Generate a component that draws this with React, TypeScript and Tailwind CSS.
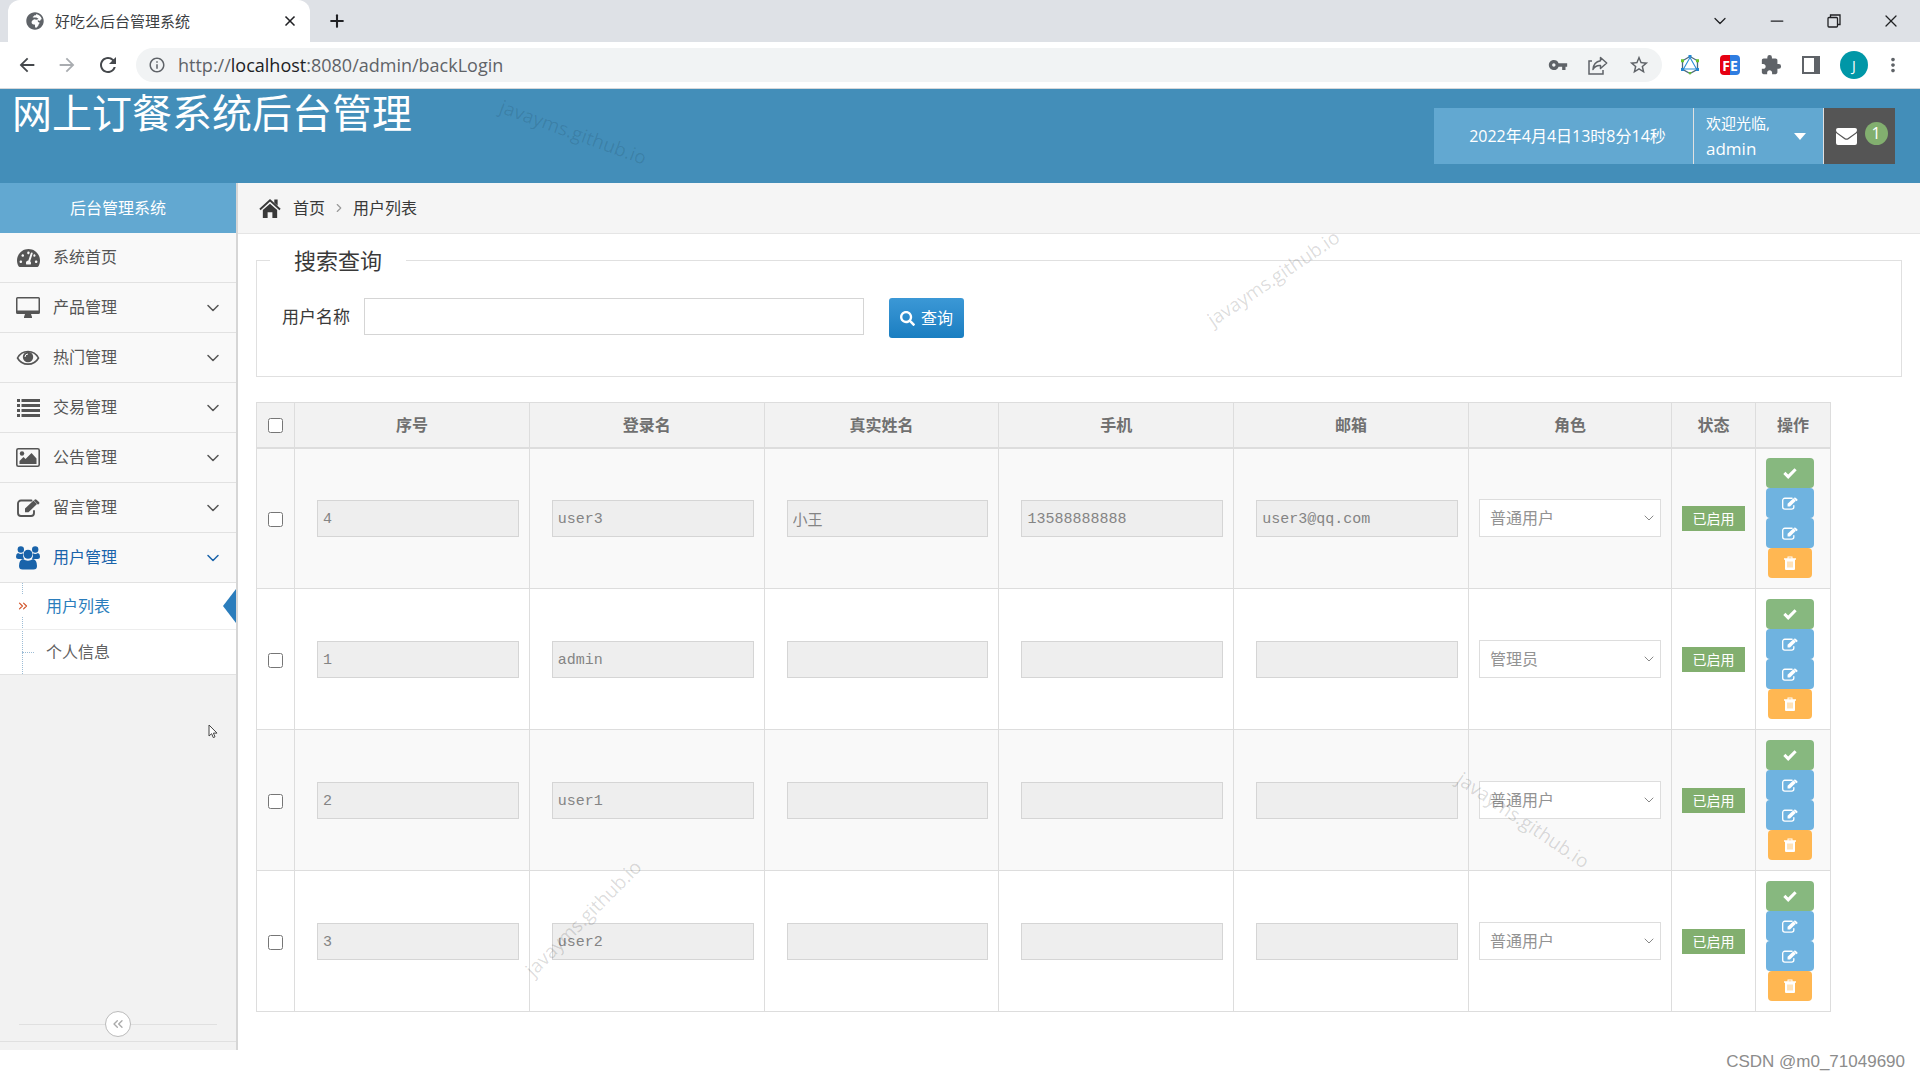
import React, { useState } from 'react';
import { FaTachometerAlt, FaGlobeAfrica, FaSearch } from 'react-icons/fa';
import {
  MdArrowBack,
  MdArrowForward,
  MdExtension,
  MdInfoOutline,
  MdMoreVert,
  MdRefresh,
  MdStarBorder,
  MdVpnKey,
} from 'react-icons/md';
import { ChevronDown, ChevronRight, ChevronsLeft, ChevronsRight, Minus, Plus, X } from 'lucide-react';

interface MenuItem {
  label: string;
  icon: React.ReactNode;
  hasChildren: boolean;
}

interface User {
  id: string;
  login: string;
  name: string;
  phone: string;
  email: string;
  role: string;
}

const USERS: User[] = [
  { id: '4', login: 'user3', name: '小王', phone: '13588888888', email: 'user3@qq.com', role: '普通用户' },
  { id: '1', login: 'admin', name: '', phone: '', email: '', role: '管理员' },
  { id: '2', login: 'user1', name: '', phone: '', email: '', role: '普通用户' },
  { id: '3', login: 'user2', name: '', phone: '', email: '', role: '普通用户' },
];

const COLUMNS = ['序号', '登录名', '真实姓名', '手机', '邮箱', '角色', '状态', '操作'];

const MonitorIcon = () => (
  <svg viewBox="0 0 24 22" className="h-[22px] w-6" fill="currentColor">
    <path fillRule="evenodd" d="M1.5 0h21A1.5 1.5 0 0 1 24 1.5v14a1.5 1.5 0 0 1-1.5 1.5H15l1 3v1H8v-1l1-3H1.5A1.5 1.5 0 0 1 0 15.500v-14A1.5 1.5 0 0 1 1.5 0zM1.5 1.5v12h21v-12z" />
  </svg>
);

const EyeIcon = () => (
  <svg viewBox="0 0 24 16" className="h-4 w-6">
    <path d="M1.5 8C6 -0.7 18 -0.7 22.5 8C18 16.200 6 16.200 1.5 8z" fill="none" stroke="currentColor" strokeWidth="1.6" />
    <circle cx="12" cy="7" r="5.2" fill="currentColor" />
    <path d="M9 7a3 3 0 0 1 3-3" fill="none" stroke="#f9f9f9" strokeWidth="1" />
  </svg>
);

const ListIcon = () => (
  <svg viewBox="0 0 23 18" className="h-[18px] w-[23px]" fill="currentColor">
    <path d="M0 0h3v3H0zM0 5h3v3H0zM0 10h3v3H0zM0 15h3v3H0zM4.500 0H23v3H4.500zM4.500 5H23v3H4.500zM4.500 10H23v3H4.500zM4.500 15H23v3H4.500z" />
  </svg>
);

const PictureIcon = () => (
  <svg viewBox="0 0 24 19" className="h-[19px] w-6">
    <rect x=".8" y=".8" width="22.4" height="17.4" rx="1.500" fill="none" stroke="currentColor" strokeWidth="1.600" />
    <circle cx="6" cy="5.500" r="2.200" fill="currentColor" />
    <path d="M3.500 16v-3l4-4 2 2L15.500 5l5 5.500V16z" fill="currentColor" />
  </svg>
);

const EditIcon = ({ className }: { className: string }) => (
  <svg viewBox="0 0 23 18" className={className}>
    <path d="M14.500 1.500H4A3 3 0 0 0 1 4.500v9.500a3 3 0 0 0 3 3h10a3 3 0 0 0 3-3v-2" fill="none" stroke="currentColor" strokeWidth="1.900" strokeLinecap="round" />
    <path d="M8 9.500L16.500 1.500 20 5 11.500 13.300H8z" fill="currentColor" />
    <path d="M17.500 .8q1-1 2 0L22 3q.8 1 0 1.800l-1 1L17 1.500z" fill="currentColor" />
  </svg>
);

const CheckIcon = () => (
  <svg viewBox="0 0 14 11" className="h-[11px] w-[14px]" fill="currentColor">
    <path d="M.3 6L2.400 3.800 5.200 6.400 11.500.2 13.700 2.300 5.200 10.900z" />
  </svg>
);

const MailIcon = () => (
  <svg viewBox="0 0 21 17" className="h-[17px] w-[21px]" fill="currentColor">
    <path d="M2 0h17q2 0 2 2 0 1.500-1.500 2.700L12 10q-1.500 1-3 0L1.500 4.700Q0 3.500 0 2 0 0 2 0z" />
    <path d="M0 5l8.500 6.200q2 1.200 4 0L21 5v10q0 2-2 2H2q-2 0-2-2z" />
  </svg>
);

const UsersIcon = () => (
  <svg viewBox="0 0 24 24" className="h-6 w-6" fill="currentColor">
    <circle cx="4.800" cy="3.500" r="3.200" />
    <circle cx="19.200" cy="3.500" r="3.200" />
    <path d="M2 7q2.800 1.800 5 .3Q6.500 10.500 8 13H2.500Q0 13 0 10.500 0 7.500 2 7zM22 7q-2.800 1.800-5 .3.500 3.200-1 5.700h5.500q2.500 0 2.500-2.500 0-3-2-3.500z" />
    <circle cx="12" cy="8.200" r="4.500" />
    <path d="M7 13q5 3.500 10 0 4 1 4 7 0 3.500-3.500 3.500h-11Q3 23.500 3 20q0-6 4-7z" />
  </svg>
);

const HomeIcon = () => (
  <svg viewBox="0 0 24 22" className="h-[21px] w-6" fill="currentColor">
    <path d="M12 6l7.500 6.500V21h-5v-6h-5v6h-5v-8.500z" />
    <path d="M1.500 12L12 2.500 22.500 12" fill="none" stroke="currentColor" strokeWidth="2" />
    <path d="M16.500 1.500h3.500v6.500l-3.500-3z" />
  </svg>
);

const TrashIcon = () => (
  <svg viewBox="0 0 12 14" className="h-[14px] w-3">
    <path d="M0 2.200h3.500V.5h5v1.700H12v1.600h-1V13q0 1-1 1H2q-1 0-1-1V3.800H0zM4.500 1.500v.7h3v-.7z" fill="#fff" fillRule="evenodd" />
    <path d="M4 5.500v6M6 5.500v6M8 5.500v6" stroke="#ffb752" strokeWidth=".8" />
  </svg>
);

const ShareIcon = () => (
  <svg viewBox="0 0 20 19" className="h-[19px] w-5" fill="none" stroke="#5f6368" strokeWidth="1.5">
    <path d="M4 5H1v13h14v-4" />
    <path d="M12.500 1.500L18.700 7l-6.200 5.500v-3Q7.500 9 5 13.500 5.500 6 12.500 4.800z" strokeLinejoin="round" />
  </svg>
);

const HexagonIcon = () => (
  <svg viewBox="0 0 20 20" className="h-5 w-5">
    <path d="M10 1.500l7.500 4.300v8.500L10 18.500l-7.500-4.200V5.800z" fill="none" stroke="#4b6a80" strokeWidth="1.3" />
    <path d="M10 2.500L16.500 14h-13z" fill="none" stroke="#2b8fd8" strokeWidth="1.1" />
    <path d="M8.500 0h3v2.500h-3zM1 13h3v3H1zM16 13h3v3h-3z" fill="#2386d1" />
    <path d="M1 4.300h3v3H1zM16 4.300h3v3h-3zM8.300 17h3.400L10 20z" fill="#66c32e" />
  </svg>
);

const MENU: MenuItem[] = [
  { label: '系统首页', icon: <FaTachometerAlt className="h-[22px] w-[23px]" />, hasChildren: false },
  { label: '产品管理', icon: <MonitorIcon />, hasChildren: true },
  { label: '热门管理', icon: <EyeIcon />, hasChildren: true },
  { label: '交易管理', icon: <ListIcon />, hasChildren: true },
  { label: '公告管理', icon: <PictureIcon />, hasChildren: true },
  { label: '留言管理', icon: <EditIcon className="h-[18px] w-[23px]" />, hasChildren: true },
  { label: '用户管理', icon: <UsersIcon />, hasChildren: true },
];

const BrowserBar = () => (
  <div>
    {/* Tab strip */}
    <div className="flex h-[42px] items-center bg-[#dee1e6] pl-2">
      <div className="flex h-full w-[302px] items-center rounded-t-xl bg-white pr-3 pl-[18px]">
        <FaGlobeAfrica className="h-[18px] w-[18px] text-[#5f6368]" />
        <span className="ml-[11px] flex-1 text-[15px] text-[#3c4043]">好吃么后台管理系统</span>
        <button aria-label="Close tab">
          <X className="h-4 w-4 text-[#202124]" strokeWidth={2.5} />
        </button>
      </div>
      <button aria-label="New tab" className="ml-[17px]">
        <Plus className="h-5 w-5 text-[#202124]" strokeWidth={2.5} />
      </button>
      <div className="ml-auto flex items-center gap-[37px] pr-[19px] text-[#202124]">
        <button aria-label="Tabs"><ChevronDown className="h-5 w-5" strokeWidth={1.5} /></button>
        <button aria-label="Minimize"><Minus className="h-5 w-5" strokeWidth={1.5} /></button>
        <button aria-label="Restore">
          <svg viewBox="0 0 14 14" className="mx-[3px] h-[14px] w-[14px]" fill="none" stroke="currentColor" strokeWidth="1.3">
            <rect x="1" y="3.5" width="9.5" height="9.5" rx="1" />
            <path d="M3.500 3.500V1H13v9.500h-2.500" />
          </svg>
        </button>
        <button aria-label="Close"><X className="h-5 w-5" strokeWidth={1.5} /></button>
      </div>
    </div>

    {/* Address bar */}
    <div className="flex h-[47px] items-center border-b border-[#d5d7da] bg-white px-4 text-[#5f6368]">
      <button aria-label="Back"><MdArrowBack className="h-[22px] w-[22px] text-[#45484c]" /></button>
      <button aria-label="Forward" className="ml-[18px]"><MdArrowForward className="h-[22px] w-[22px] text-[#a9acb0]" /></button>
      <button aria-label="Reload" className="ml-[18px]"><MdRefresh className="h-6 w-6 text-[#45484c]" /></button>
      <div className="ml-4 flex h-[34px] flex-1 items-center rounded-full bg-[#f1f3f4] pr-3 pl-3">
        <MdInfoOutline className="h-[18px] w-[18px]" />
        <span className="ml-3 flex-1 text-[18px]">
          http://<span className="text-[#202124]">localhost</span>:8080/admin/backLogin
        </span>
        <div className="flex items-center gap-5">
          <MdVpnKey className="h-5 w-5" />
          <ShareIcon />
          <MdStarBorder className="h-[22px] w-[22px]" />
        </div>
      </div>
      <div className="ml-[18px] flex items-center gap-5">
        <HexagonIcon />
        <span className="flex h-5 w-5 items-center justify-center rounded-sm bg-linear-to-r from-[#e60012] from-50% to-[#2f7de1] to-50% text-[14px] font-bold text-white">
          FE
        </span>
        <MdExtension className="h-[22px] w-[22px]" />
        <span className="h-[18px] w-[18px] border-2 border-r-[6px] border-[#5f6368]" />
        <span className="flex h-7 w-7 items-center justify-center rounded-full bg-[#0097a7] text-[14px] text-white">J</span>
      </div>
      <MdMoreVert className="ml-[14px] h-[22px] w-[22px]" />
    </div>
  </div>
);

const Header = () => (
  <header className="flex h-[94px] items-start justify-between bg-[#438eb9] pr-[25px] pl-3 text-white">
    <h1 className="text-[40px] leading-[48px]">网上订餐系统后台管理</h1>
    <div className="mt-[19px] flex h-14">
      <div className="flex w-[259px] items-center justify-center bg-[#62a8d1] pl-2 text-[16px]">2022年4月4日13时8分14秒</div>
      <button className="flex w-[131px] items-center justify-between border-x border-[#e1e1e1] bg-[#62a8d1] pr-[17px] pl-3 text-left">
        <span>
          <span className="block text-[15px] leading-[26px]">欢迎光临,</span>
          <span className="block text-[17px] leading-[26px]">admin</span>
        </span>
        <svg viewBox="0 0 12 7" className="h-[7px] w-3" fill="currentColor"><path d="M0 0h12L6 7z" /></svg>
      </button>
      <button className="flex w-[71px] items-center justify-center gap-2 bg-[#555] pl-1">
        <MailIcon />
        <span className="mb-[6px] flex h-[23px] w-[23px] items-center justify-center rounded-full bg-[#82af6f] text-[16px]">1</span>
      </button>
    </div>
  </header>
);

const Sidebar = () => (
  <nav className="flex w-[238px] shrink-0 flex-col border-r-2 border-[#d6d6d6] bg-[#f2f2f2]">
    <div className="flex h-[50px] items-center justify-center bg-[#62a8d1] text-[16px] text-white">后台管理系统</div>
    {MENU.map((item) => (
      <a
        key={item.label}
        href="#"
        className={`flex h-[50px] items-center border-b border-[#e2e2e2] bg-[#f9f9f9] pr-[13px] pl-4 text-[16px] ${
          item.label === '用户管理' ? 'text-[#1963aa]' : 'text-[#555]'
        }`}
      >
        <span className="flex w-6 justify-center">{item.icon}</span>
        <span className="mb-[2px] ml-[13px] flex-1">{item.label}</span>
        {item.hasChildren && <ChevronDown className="h-5 w-5" strokeWidth={1.8} />}
      </a>
    ))}
    <ul className="relative border-b border-[#e2e2e2] bg-white text-[16px]">
      <li className="absolute top-0 bottom-0 left-[22px] border-l border-dotted border-[#9dbdd6]" aria-hidden="true" />
      <li>
        <a href="#" className="relative flex h-[47px] items-center border-b border-[#ededed] pl-4 text-[#2b7dbc]">
          <span className="bg-white py-1">
            <ChevronsRight className="h-[14px] w-[14px] text-[#d2562c]" />
          </span>
          <span className="ml-4">用户列表</span>
          <svg viewBox="0 0 13 34" className="ml-auto h-[34px] w-[13px]"><path d="M13 0v34L0 17z" fill="#2b7dbc" /></svg>
        </a>
      </li>
      <li>
        <a href="#" className="flex h-11 items-center pl-[22px] text-[#616161]">
          <span className="w-3 border-t border-dotted border-[#9dbdd6]" />
          <span className="ml-3">个人信息</span>
        </a>
      </li>
    </ul>
    <div className="mt-auto mb-2 flex items-center border-b border-[#e0e0e0] px-[19px] pb-1">
      <span className="flex-1 border-t border-[#e0e0e0]" />
      <button aria-label="Collapse" className="flex h-[26px] w-[26px] items-center justify-center rounded-full border border-[#bbb] bg-white text-[#aaa]">
        <ChevronsLeft className="h-4 w-4" />
      </button>
      <span className="flex-1 border-t border-[#e0e0e0]" />
    </div>
  </nav>
);

const ReadonlyField = ({ label, value }: { label: string; value: string }) => (
  <td className="border border-[#ddd] pr-[10px] pl-[22px]">
    <input
      aria-label={label}
      value={value}
      disabled
      className="block h-[37px] w-full border border-[#d5d5d5] bg-[#eee] px-[5px] pt-[2px] font-['Liberation_Mono','Noto_Sans_CJK_SC',monospace] text-[15px] text-[#848484]"
    />
  </td>
);

const UserRow = ({ user }: { user: User }) => (
  <tr className="h-[141px] odd:bg-[#f9f9f9]">
    <td className="border border-[#ddd] text-center">
      <input type="checkbox" aria-label={`选择 ${user.login}`} className="mt-2 h-[15px] w-[15px]" />
    </td>
    <ReadonlyField label="序号" value={user.id} />
    <ReadonlyField label="登录名" value={user.login} />
    <ReadonlyField label="真实姓名" value={user.name} />
    <ReadonlyField label="手机" value={user.phone} />
    <ReadonlyField label="邮箱" value={user.email} />
    <td className="border border-[#ddd] px-[10px]">
      <div className="relative">
        <select
          aria-label="角色"
          disabled
          className="block h-[38px] w-full appearance-none border border-[#ddd] bg-white px-[10px] text-[16px] text-[#939393] opacity-100"
        >
          <option>{user.role}</option>
        </select>
        <ChevronDown className="pointer-events-none absolute top-[11px] right-1 h-4 w-4 text-[#888]" strokeWidth={1.5} />
      </div>
    </td>
    <td className="border border-[#ddd] text-center">
      <span className="inline-flex h-[25px] w-[63px] items-center justify-center bg-[#82af6f] text-[14px] text-white">已启用</span>
    </td>
    <td className="border border-[#ddd] pl-[10px]">
      <div className="flex w-12 flex-col items-center text-white">
        <button aria-label="启用" className="flex h-[30px] w-full items-center justify-center rounded bg-[#87b87f]">
          <CheckIcon />
        </button>
        <button aria-label="编辑" className="flex h-[30px] w-full items-center justify-center rounded bg-[#6fb3e0]">
          <EditIcon className="h-[13px] w-4" />
        </button>
        <button aria-label="修改" className="flex h-[30px] w-full items-center justify-center rounded bg-[#6fb3e0]">
          <EditIcon className="h-[13px] w-4" />
        </button>
        <button aria-label="删除" className="flex h-[30px] w-11 items-center justify-center rounded bg-[#ffb752]">
          <TrashIcon />
        </button>
      </div>
    </td>
  </tr>
);

export default function App() {
  const [keyword, setKeyword] = useState('');

  return (
    <div className="relative min-h-screen overflow-hidden bg-white font-['Open_Sans','Noto_Sans_CJK_SC',sans-serif] text-[#393939]">
      <BrowserBar />
      <Header />

      <div className="flex min-h-[867px]">
        <Sidebar />
        <main className="min-w-0 flex-1">
          {/* Breadcrumb */}
          <div className="flex h-[51px] items-center border-b border-[#e5e5e5] bg-[#f5f5f5] pl-5 text-[16px]">
            <HomeIcon />
            <a href="#" className="ml-[11px]">首页</a>
            <ChevronRight className="mx-[7px] h-[14px] w-[14px] text-[#999]" />
            <span>用户列表</span>
          </div>

          <div className="px-[18px] pt-[10px]">
            <fieldset className="h-[133px] border border-[#e0e0e0] pl-[25px]">
              <legend className="-ml-3 px-6 text-[22px] leading-8">搜索查询</legend>
              <div className="flex items-start pt-[22px]">
                <label htmlFor="username" className="mt-[6px] text-[17px]">用户名称</label>
                <input
                  id="username"
                  value={keyword}
                  onChange={(e) => setKeyword(e.target.value)}
                  className="ml-[14px] h-[37px] w-[500px] border border-[#d5d5d5] px-2 text-[16px]"
                />
                <button className="ml-[25px] flex h-10 w-[75px] items-center justify-center gap-[6px] rounded-[3px] bg-linear-to-b from-[#3b98d6] to-[#197ec1] text-[16px] text-white">
                  <FaSearch className="h-[15px] w-[15px]" />
                  查询
                </button>
              </div>
            </fieldset>

            <div className="pr-[71px]">
              <table className="mt-[25px] w-full table-fixed border-collapse">
                <colgroup>
                  <col className="w-[38px]" />
                  <col span={5} />
                  <col className="w-[203px]" />
                  <col className="w-[84px]" />
                  <col className="w-[75px]" />
                </colgroup>
                <thead>
                  <tr className="h-[45px] bg-[#f2f2f2] text-[16px] text-[#707070]">
                    <th className="border border-b-2 border-[#ddd]">
                      <input type="checkbox" aria-label="全选" className="mt-2 h-[15px] w-[15px]" />
                    </th>
                    {COLUMNS.map((column) => (
                      <th key={column} className="border border-b-2 border-[#ddd] font-bold">{column}</th>
                    ))}
                  </tr>
                </thead>
                <tbody>
                  {USERS.map((user) => (
                    <UserRow key={user.id} user={user} />
                  ))}
                </tbody>
              </table>
            </div>
          </div>
        </main>
      </div>

      {/* Watermarks */}
      <div className="pointer-events-none absolute inset-0 text-[19px] leading-6 text-black/15">
        <span className="absolute top-[120px] left-[496px] rotate-[20deg] text-black/10">javayms.github.io</span>
        <span className="absolute top-[266px] left-[1196px] rotate-[-34deg]">javayms.github.io</span>
        <span className="absolute top-[808px] left-[1446px] rotate-[34deg]">javayms.github.io</span>
        <span className="absolute top-[906px] left-[506px] rotate-[-45deg]">javayms.github.io</span>
      </div>
      <span className="absolute right-[15px] bottom-1 font-['Liberation_Sans',sans-serif] text-[17px] leading-7 text-[#8c8c8c]">CSDN @m0_71049690</span>

      {/* Mouse pointer */}
      <svg viewBox="0 0 10 15" className="pointer-events-none absolute top-[724px] left-[208px] h-[15px] w-[10px]">
        <path d="M1 1v11l2.600-2.300 1.700 3.900 1.700-.8-1.600-3.700H9z" fill="#fff" stroke="#444" strokeWidth="1" />
      </svg>
    </div>
  );
}
